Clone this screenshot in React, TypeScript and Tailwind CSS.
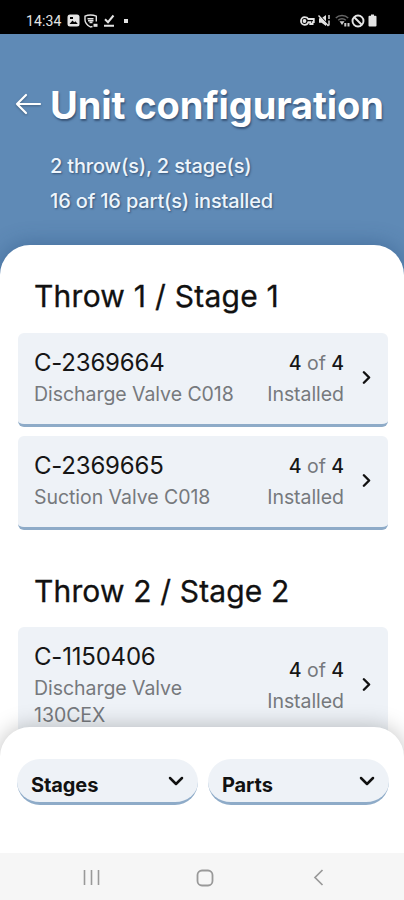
import React from "react";
import { ChevronDown, ChevronRight } from "lucide-react";

type Part = { code: string; name: string; installed: number; total: number };

const throw1: Part[] = [
  { code: "C-2369664", name: "Discharge Valve C018", installed: 4, total: 4 },
  { code: "C-2369665", name: "Suction Valve C018", installed: 4, total: 4 },
];

const throw2: Part[] = [{ code: "C-1150406", name: "Discharge Valve 130CEX", installed: 4, total: 4 }];

function StatusBar() {
  return (
    <div className="h-[34px] shrink-0 bg-black text-[#e4e4e4] flex items-center justify-between pt-[7px] pl-[26px] pr-[27px]">
      <div className="flex items-center">
        <span className="text-[14px] leading-[16px] w-[41px] tracking-[0.1px] font-['Roboto',sans-serif]">14:34</span>
        {/* gallery */}
        <svg width="13" height="13" viewBox="0 0 13 13">
          <rect x="0.5" y="0.5" width="12" height="12" rx="2.5" fill="currentColor" />
          <path d="M2.5 10 5.5 6.5 7.2 8.3 8.4 7.2 10.8 10Z" fill="#000" />
          <path d="M3 3h3v2H3z" fill="#000" />
        </svg>
        {/* shield */}
        <svg className="ml-[4px]" width="14" height="14" viewBox="0 0 14 14" fill="none" stroke="currentColor" strokeWidth="1.4">
          <path d="M8.5 12.5 6.5 13C3 11 1 9 1 6V2.2C4 .8 9 .8 12.3 2.2V7.5" />
          <path d="M3.5 4.7h6M4 6.7h5.500M5.500 8.500h3" />
          <rect x="9.5" y="9.8" width="4" height="3" fill="currentColor" stroke="none" />
        </svg>
        {/* download done */}
        <svg className="ml-[5px]" width="12" height="13" viewBox="0 0 12 13" fill="none" stroke="currentColor" strokeWidth="2">
          <path d="M2 5.2 5 8.2 10.5 1.5M1 11.8h10" />
        </svg>
        <div className="ml-[9px] size-[4px] bg-current" />
      </div>
      <div className="flex items-center">
        {/* vpn key */}
        <svg width="15" height="10" viewBox="0 0 15 10" fill="none" stroke="currentColor" strokeWidth="1.8">
          <path d="M8.3 3H13.8V6.2H12.6V8H10.2V6.2H8.3C7.7 8 6.3 8.8 4.6 8.8 2.4 8.8 1 7 1 5S2.4 1.2 4.6 1.2C6.3 1.2 7.7 2 8.3 3Z" />
          <circle cx="4.5" cy="5" r="1" fill="currentColor" />
        </svg>
        {/* muted */}
        <svg className="ml-[3px]" width="13" height="13" viewBox="0 0 13 13">
          <path d="M1 4.3h2.500L8 1v11L3.500 8.700H1Z" fill="currentColor" />
          <path d="M1 .8 11.5 12" stroke="#000" strokeWidth="1.2" />
          <path d="M.5 1.5 10.500 12M11 1v4M11 6.500v5" stroke="currentColor" strokeWidth="1.4" />
        </svg>
        {/* wifi */}
        <svg className="ml-[4px] text-[#666]" width="16" height="13" viewBox="0 0 16 13" fill="none" stroke="currentColor" strokeWidth="1.5">
          <path d="M.8 4C4 .7 10 .7 13.2 4M3.200 6.200C5.300 4.200 8.700 4.200 10.800 6.200" />
          <path d="M4.5 7.2h5L7 11Z" fill="#ccc" stroke="none" />
          <path d="M10.3 9v3.500M13.500 12.500V9" stroke="#ccc" strokeWidth="2" />
        </svg>
        {/* blocked */}
        <svg width="14" height="14" viewBox="0 0 14 14" fill="none" stroke="currentColor" strokeWidth="1.9">
          <circle cx="7" cy="7" r="5.5" />
          <path d="m3 3 8 8" />
        </svg>
        {/* battery */}
        <svg className="ml-[3px]" width="9" height="13" viewBox="0 0 9 13" fill="currentColor">
          <path d="M3 .5h3v1.300h1.500a1 1 0 0 1 1 1V11.500a1 1 0 0 1-1 1h-6a1 1 0 0 1-1-1V2.800a1 1 0 0 1 1-1H3Z" />
        </svg>
      </div>
    </div>
  );
}

function PartCard({ part }: { part: Part }) {
  return (
    <div className="min-h-[94px] rounded-[6px] border-b-[3px] border-[#8eabc8] bg-[#eef2f7] pl-[16px] pr-[11px] pt-[15px] pb-[14px] flex items-center">
      <div className="flex-1 self-start">
        <div className="text-[24px] leading-[30px] tracking-[-0.2px] text-[#161616]">{part.code}</div>
        <div className="mt-[3px] text-[19.5px] leading-[27px] tracking-[-0.05px] text-[#76797d]">{part.name}</div>
      </div>
      <div className="shrink-0 pl-[14px] text-right text-[19.5px] leading-[31px] tracking-[-0.05px] text-[#76797d]">
        <div>
          <span className="font-medium text-[#161616]">{part.installed}</span> of <span className="font-medium text-[#161616]">{part.total}</span>
        </div>
        <div>Installed</div>
      </div>
      <ChevronRight className="ml-[12px] -mt-[3px] shrink-0 text-[#111]" size={21} strokeWidth={2.8} />
    </div>
  );
}

function Dropdown({ label }: { label: string }) {
  return (
    <button className="h-[46px] flex-1 rounded-full border-b-[3px] border-[#8eabc8] bg-[#eef2f7] pl-[14px] pr-[10px] flex items-center justify-between">
      <span className="text-[20px] leading-[26px] font-bold tracking-[-0.1px] text-[#111] pt-[8px]">{label}</span>
      <ChevronDown className="text-[#111] mt-[1px]" size={24} strokeWidth={2.5} />
    </button>
  );
}

export default function App() {
  return (
    <div className="w-[404px] h-[900px] overflow-hidden flex flex-col bg-[#5f8ab6] font-['Inter',sans-serif] [font-optical-sizing:none]">
      <StatusBar />
      <header className="h-[211px] shrink-0 text-white pl-[14px] pt-[49px]">
        <div className="flex items-center">
          <svg
            className="shrink-0 -mt-[2px] drop-shadow-[0_1px_1px_rgba(0,0,0,0.3)]"
            width="28"
            height="22"
            viewBox="0 0 28 22"
            fill="none"
            stroke="currentColor"
            strokeWidth="2.2"
            strokeLinecap="round"
            strokeLinejoin="round"
          >
            <path d="M26 11H3M12 2 3 11l9 9" />
          </svg>
          <h1 className="ml-[8px] whitespace-nowrap text-[38px] leading-[44px] font-bold tracking-[-0.1px] [text-shadow:1px_2px_2px_rgba(30,50,80,0.6)]">Unit configuration</h1>
        </div>
        <div className="pl-[36px] pt-[22px] text-[20px] leading-[35px] font-medium tracking-[-0.17px] text-[#edf5fc] [text-shadow:1px_1px_2px_rgba(30,50,80,0.6)]">
          <div>2 throw(s), 2 stage(s)</div>
          <div>16 of 16 part(s) installed</div>
        </div>
      </header>
      <div className="flex-1 min-h-0 flex flex-col rounded-t-[30px] bg-white shadow-[0_0_22px_rgba(30,70,120,0.45)]">
        <main className="flex-1 min-h-0 overflow-hidden pl-[18px] pr-[16px] pt-[31px]">
          <h2 className="pl-[16px] text-[30px] leading-[40px] tracking-[0.25px] text-[#111] [-webkit-text-stroke:0.3px_#111]">Throw 1 / Stage 1</h2>
          <div className="mt-[17px] flex flex-col gap-[9px]">
            {throw1.map((p) => (
              <PartCard key={p.code} part={p} />
            ))}
          </div>
          <h2 className="mt-[41px] pl-[16px] text-[30px] leading-[40px] tracking-[0.15px] text-[#111] [-webkit-text-stroke:0.3px_#111]">Throw 2 / Stage 2</h2>
          <div className="mt-[16px] flex flex-col gap-[9px]">
            {throw2.map((p) => (
              <PartCard key={p.code} part={p} />
            ))}
          </div>
        </main>
        <footer className="relative -mt-[30px] h-[126px] shrink-0 rounded-t-[30px] bg-white shadow-[0_0_22px_rgba(0,0,0,0.25)] pl-[17px] pr-[15px] pt-[32px] flex items-start gap-[10px]">
          <Dropdown label="Stages" />
          <Dropdown label="Parts" />
        </footer>
        <nav className="relative h-[47px] shrink-0 bg-[#f6f6f6] text-[#999] flex items-center justify-between pl-[83px] pr-[80px] pt-[2px]">
          <svg width="17" height="17" viewBox="0 0 17 17" stroke="currentColor" strokeWidth="1.6">
            <path d="M1.5 1v15M8.500 1v15M15.500 1v15" />
          </svg>
          <svg className="-ml-[4px]" width="18" height="18" viewBox="0 0 18 18" fill="none" stroke="currentColor" strokeWidth="1.8">
            <rect x="1.5" y="1.5" width="15" height="15" rx="4.5" />
          </svg>
          <svg width="11" height="17" viewBox="0 0 11 17" fill="none" stroke="currentColor" strokeWidth="1.7">
            <path d="M9.5 1 2 8.5l7.500 7.500" />
          </svg>
        </nav>
      </div>
    </div>
  );
}
